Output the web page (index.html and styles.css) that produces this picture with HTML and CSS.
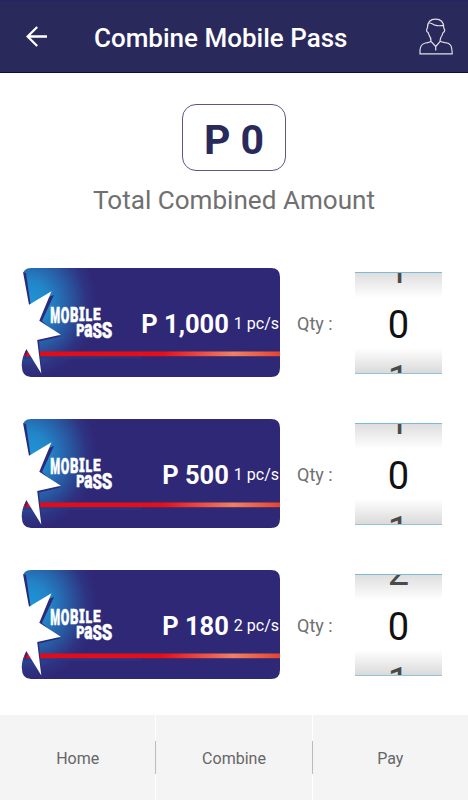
FILE: index.html
```
<!DOCTYPE html>
<html lang="en">
<head>
    <meta charset="UTF-8">
    <meta name="viewport" content="width=device-width, initial-scale=1.0">
    <title>Combine Mobile Pass</title>
    <link rel="stylesheet" href="styles.css">
</head>
<body>
    <!-- Shared card artwork -->
    <svg class="defs" width="0" height="0" aria-hidden="true">
        <defs>
            <radialGradient id="glow" gradientUnits="userSpaceOnUse" cx="8" cy="36" r="68" gradientTransform="translate(0 -4) scale(1 1.100)">
                <stop offset="0" stop-color="#1c98d8"/>
                <stop offset="0.3" stop-color="#2285c8"/>
                <stop offset="0.6" stop-color="#2959a2"/>
                <stop offset="0.85" stop-color="#2e3381"/>
                <stop offset="1" stop-color="#2f2877"/>
            </radialGradient>
            <linearGradient id="stripe" gradientUnits="userSpaceOnUse" x1="0" y1="0" x2="259" y2="0">
                <stop offset="0" stop-color="#e20a17"/>
                <stop offset="0.55" stop-color="#e60f18"/>
                <stop offset="0.82" stop-color="#f08064"/>
                <stop offset="1" stop-color="#e8432c"/>
            </linearGradient>
            <clipPath id="cardShape">
                <path d="M10 0H250Q259 0 259 9V100Q259 109 250 109H10Q1 109 0.800 98Q0.300 91 5.300 81L2 60L1.500 8Q2 0 10 0Z"/>
            </clipPath>
            <g id="passArt">
                <g clip-path="url(#cardShape)">
                    <rect width="260" height="110" fill="url(#glow)"/>
                    <rect y="88" width="120" height="3" fill="#24398a" opacity="0.6"/>
                    <rect y="83.500" width="260" height="4.700" fill="url(#stripe)"/>
                    <path fill="#2b2a7b" d="M1.500 4L5 5L9.500 36L33 27L21 53L39 68.500L18 73.500L20.500 104L7 83L4 90Z"/>
                </g>
                <path fill="#fff" d="M0 4H2L8 36.700L30.500 23.300L18.300 52.700L39.800 66.800L16.200 72L20.300 105.500L5.300 81L0 92Z"/>
                <g class="logo-text">
                    <text transform="translate(29.300 54.800) scale(0.660 1.320)" font-size="17">M</text>
                    <text transform="translate(39.800 54.800) scale(0.800 1.380)" font-size="15.500">O</text>
                    <text transform="translate(48.900 54) scale(0.850 1.320)" font-size="15.500">B</text>
                    <text class="slab" transform="translate(58 53.400) scale(0.850 1.240)" font-size="15.500">I</text>
                    <text transform="translate(64.500 52.900) scale(0.850 1.200)" font-size="14.500">L</text>
                    <text transform="translate(72 52.300) scale(0.970 1.140)" font-size="14">E</text>
                    <text transform="translate(55.200 68) scale(0.900 1.200)" font-size="14">P</text>
                    <text transform="translate(63.300 69) scale(1 1.500)" font-size="15.500">a</text>
                    <text transform="translate(71.600 69.500) scale(0.950 1.270)" font-size="16">S</text>
                    <text transform="translate(80.800 69.800) scale(1.020 1.320)" font-size="16.500">S</text>
                </g>
            </g>
        </defs>
    </svg>

    <header class="app-bar">
        <svg class="back-icon" width="22" height="21" viewBox="0 0 22 21">
            <path d="M21 10.500H1.500M11.200 1L1.600 10.500L11.200 20" fill="none" stroke="#fff" stroke-width="2.300"/>
        </svg>
        <h1>Combine Mobile Pass</h1>
        <svg class="user-icon" width="34" height="37" viewBox="0 0 34 37">
            <path d="M12 23.300Q12 19.500 10.200 17.500L9.300 14.800Q7.200 13.500 7.600 11.800L8.500 9.500C8.600 3.600 11.500 1.200 16.500 1.200C21.800 1.200 24.700 3.800 24.700 9.500L25.700 12.200Q25.800 13.800 24 14.800L23 17.500Q21 20 21 23.300M9 5.200C12 4.300 12.500 5.600 16 7.200Q20 8.200 24 7.300M12 23.300L16.700 28.500L21.200 23.300M12 23.300Q11 24.300 6.500 25Q1.500 26 1 32V35.800H33.200Q33 28.500 31.300 26.800Q29.800 25 26 24.700Q22.500 24.200 21.200 23.300M16.700 28.500V32.500" fill="none" stroke="#e2dfe5" stroke-width="1.200"/>
        </svg>
    </header>

    <main>
        <section class="total">
            <div class="total-amount">P 0</div>
            <p>Total Combined Amount</p>
        </section>

        <section class="pass-list">
            <div class="pass-row">
                <div class="pass-card">
                    <svg class="card-art" width="260" height="110"><use href="#passArt"/></svg>
                    <div class="card-value"><strong>P 1,000</strong><span>1 pc/s</span></div>
                </div>
                <span class="qty">Qty :</span>
                <div class="picker"><span>1</span><span class="selected">0</span><span>1</span></div>
            </div>
            <div class="pass-row">
                <div class="pass-card">
                    <svg class="card-art" width="260" height="110"><use href="#passArt"/></svg>
                    <div class="card-value"><strong>P 500</strong><span>1 pc/s</span></div>
                </div>
                <span class="qty">Qty :</span>
                <div class="picker"><span>1</span><span class="selected">0</span><span>1</span></div>
            </div>
            <div class="pass-row">
                <div class="pass-card">
                    <svg class="card-art" width="260" height="110"><use href="#passArt"/></svg>
                    <div class="card-value"><strong>P 180</strong><span>2 pc/s</span></div>
                </div>
                <span class="qty">Qty :</span>
                <div class="picker"><span>2</span><span class="selected">0</span><span>1</span></div>
            </div>
        </section>
    </main>

    <nav class="bottom-nav">
        <a>Home</a>
        <span class="divider"></span>
        <a>Combine</a>
        <span class="divider"></span>
        <a>Pay</a>
    </nav>
</body>
</html>
```
FILE: styles.css
```
* {
    box-sizing: border-box;
}

body {
    display: flex;
    flex-direction: column;
    height: 800px;
    margin: 0;
    font-family: Roboto, "Liberation Sans", sans-serif;
    background-color: #fff;
    color: #707070;
    overflow: hidden;
}

.defs {
    position: absolute;
}

/* Header */
.app-bar {
    display: flex;
    align-items: center;
    height: 73px;
    padding: 0 15px 0 26px;
    background-color: #2a295c;
    border-top: 1px solid #24246d;
    border-bottom: 1px solid #0d0c4a;
    color: #fff;
}

.app-bar h1 {
    margin: 2px 0 0 46px;
    font-size: 26px;
    line-height: 30px;
    font-weight: 500;
    white-space: nowrap;
}

.user-icon {
    margin-left: auto;
}

/* Total */
.total {
    display: flex;
    flex-direction: column;
    align-items: center;
    padding-top: 31px;
}

.total-amount {
    width: 104px;
    height: 67px;
    border: 1px solid #59578b;
    border-radius: 14px;
    color: #2a295c;
    font-size: 41px;
    line-height: 70px;
    font-weight: 700;
    text-align: center;
}

.total p {
    margin: 13px 0 0;
    font-size: 26.1px;
    line-height: 32px;
    white-space: nowrap;
}

/* Passes */
.pass-list {
    display: flex;
    flex-direction: column;
    gap: 41px;
    padding: 52px 26px 0 21px;
}

.pass-row {
    display: flex;
    align-items: center;
    height: 110px;
}

.pass-card {
    display: grid;
    width: 260px;
    height: 110px;
}

.card-art,
.card-value {
    grid-area: 1 / 1;
}

.logo-text {
    fill: #fff;
    stroke: #fff;
    stroke-width: 0.4;
    font-family: Roboto, "Open Sans", sans-serif;
    font-weight: 900;
}

.logo-text .slab {
    font-family: "Noto Sans", sans-serif;
}

.card-value {
    display: flex;
    align-items: center;
    justify-content: flex-end;
    gap: 5px;
    padding: 1px 2px 0 0;
    color: #fff;
    white-space: nowrap;
}

.card-value strong {
    font-size: 25.5px;
    font-weight: 700;
}

.card-value span {
    font-size: 16px;
}

.qty {
    width: 58px;
    margin: 1px 0 0 16px;
    font-size: 18px;
}

.picker {
    display: flex;
    flex-direction: column;
    align-items: center;
    justify-content: center;
    width: 87px;
    height: 102px;
    padding-top: 4px;
    overflow: hidden;
    border-top: 1px solid #7cbbd5;
    border-bottom: 1px solid #8fc4dc;
    background: linear-gradient(#dedede, #fff 25%, #fff 75%, #dadada);
    color: #4a4a4a;
    font-size: 38px;
    line-height: 55px;
}

.picker span {
    flex: none;
}

.picker .selected {
    color: #111;
}

/* Bottom navigation */
.bottom-nav {
    display: flex;
    height: 85px;
    margin-top: auto;
}

.bottom-nav a {
    display: flex;
    flex: 1;
    align-items: center;
    justify-content: center;
    padding-top: 2px;
    background-color: #f4f4f4;
    color: #666;
    font-size: 16px;
}

.bottom-nav .divider {
    width: 1px;
    height: 33px;
    margin-top: 26px;
    background-color: #bbb;
}
```
